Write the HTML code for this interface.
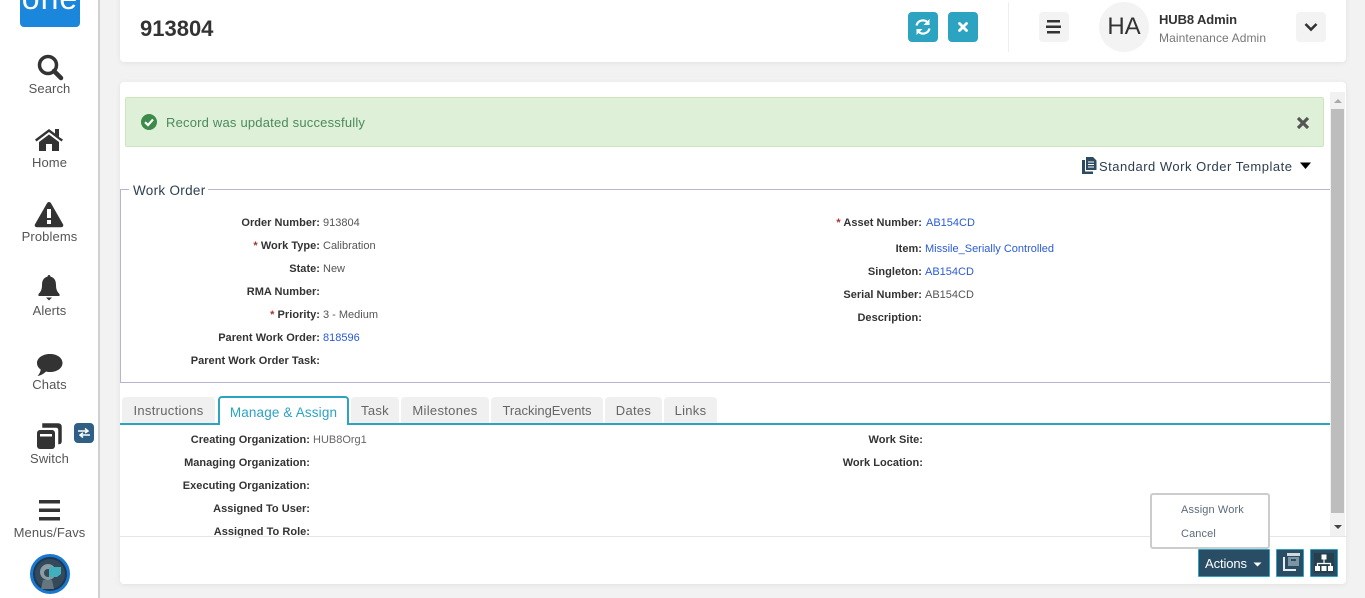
<!DOCTYPE html>
<html><head><meta charset="utf-8"><style>
*{box-sizing:border-box}
html,body{margin:0;padding:0;width:1365px;height:598px;overflow:hidden;background:#f2f2f2;font-family:"Liberation Sans",sans-serif;color:#333}
.a{position:absolute}
.t{position:absolute;white-space:nowrap;line-height:16px;height:16px}
.nav{position:absolute;left:0;width:99px;text-align:center;font-size:13px;letter-spacing:.1px;color:#555;line-height:16px;margin-top:1px}
.l{position:absolute;white-space:nowrap;line-height:16px;height:16px;text-align:right;font-size:11px;font-weight:bold;color:#333;letter-spacing:.03px;margin-top:1px}
.v{position:absolute;white-space:nowrap;line-height:16px;height:16px;font-size:11px;color:#555;letter-spacing:0;margin-top:1px}
.k{color:#2a5bd7}
.r{color:#a33}
.tab{position:absolute;top:397px;height:26px;background:#f0f0f0;border-radius:4px 4px 0 0;text-align:center;font-size:13px;line-height:27px;color:#666;letter-spacing:.3px}
</style></head><body>

<div class="a" style="left:0;top:0;width:100px;height:598px;background:#fff;border-right:2px solid #d0d0d0"></div>
<div class="a" style="left:20px;top:-10px;width:60px;height:37px;background:#1a86dc;border-radius:0 0 4px 4px;overflow:hidden;color:#fff;text-align:center;font-size:32px;line-height:16px;letter-spacing:1px">one</div>

<svg class="a" style="left:36px;top:53px" width="28" height="28" viewBox="0 0 28 28"><circle cx="12" cy="12" r="8.500" fill="none" stroke="#333" stroke-width="3.500"/><path d="M18 18l7 7" stroke="#333" stroke-width="4.500" stroke-linecap="round"/></svg>
<div class="nav" style="top:80px">Search</div>
<svg class="a" style="left:34px;top:127px" width="30" height="26" viewBox="0 0 30 26"><path d="M1 12.500L15 2l6 4.500V2h4v8l4 2.500-1.500 2L15 5 2.500 14.500z" fill="#333"/><path d="M5 15L15 7.500 25 15v9h-7v-7h-6v7H5z" fill="#333"/></svg>
<div class="nav" style="top:154px">Home</div>
<svg class="a" style="left:34px;top:201px" width="30" height="27" viewBox="0 0 30 27"><path d="M15 1c1 0 1.500.5 2 1.300l12 21c.8 1.500-.2 3-2 3H3c-1.800 0-2.800-1.500-2-3l12-21C13.500 1.500 14 1 15 1z" fill="#333"/><rect x="13" y="8" width="4" height="9" fill="#fff"/><rect x="13" y="19" width="4" height="4" fill="#fff"/></svg>
<div class="nav" style="top:228px">Problems</div>
<svg class="a" style="left:38px;top:275px" width="22" height="26" viewBox="0 0 22 26"><path d="M11 0c1 0 1.500.7 1.500 1.800C16.500 2.500 18 6 18 10c0 5 1.500 7 3.500 9v2H.5v-2C2.500 17 4 15 4 10c0-4 1.500-7.500 5.500-8.200C9.500.7 10 0 11 0z" fill="#333"/><path d="M8 22.500h6L11 25.500z" fill="#333"/></svg>
<div class="nav" style="top:302px">Alerts</div>
<svg class="a" style="left:36px;top:353px" width="27" height="24" viewBox="0 0 27 24"><path d="M14 1c7 0 12.500 3.800 12.500 9S21 19 14 19c-1.500 0-3-.2-4-.5C8 20.500 5 22.500 1.500 23c1.700-1.700 3-4 3.200-6.500C2.500 15 1 12.700 1 10 1 4.800 7 1 14 1z" fill="#333"/></svg>
<div class="nav" style="top:376px">Chats</div>
<svg class="a" style="left:36px;top:423px" width="27" height="27" viewBox="0 0 27 27"><path d="M7 1h15c2 0 3 1 3 3v14c0 2-1 2.500-2 2.500V7c0-2-1-3-3-3H7z" fill="#333" stroke="#333" stroke-width="1.500"/><rect x="1" y="7" width="18" height="19" rx="3" fill="#333"/><rect x="4" y="11" width="12" height="2.500" fill="#fff"/></svg>
<div class="a" style="left:74px;top:423px;width:20px;height:20px;background:#2f5f85;border-radius:4px"></div>
<svg class="a" style="left:77px;top:427px" width="14" height="12" viewBox="0 0 14 12"><path d="M1 4h9M8 1.500L11 4 8 6M13 8H4M6 5.800L3 8l3 2.500" stroke="#fff" stroke-width="1.500" fill="none"/></svg>
<div class="nav" style="top:450px">Switch</div>
<svg class="a" style="left:39px;top:500px" width="22" height="22"><rect x="0" y="0" width="21" height="3.500" fill="#333"/><rect x="0" y="8.500" width="21" height="3.500" fill="#333"/><rect x="0" y="17" width="21" height="3.500" fill="#333"/></svg>
<div class="nav" style="top:524px">Menus/Favs</div>
<svg class="a" style="left:30px;top:554px" width="40" height="40" viewBox="0 0 40 40"><circle cx="20" cy="20" r="18.500" fill="#1c3a55" stroke="#1a78d0" stroke-width="3"/><circle cx="20" cy="20" r="15" fill="#34495a"/><circle cx="18" cy="18" r="8" fill="#8a9ca6"/><circle cx="18" cy="19" r="4" fill="#3a4a55"/><path d="M19 13h12v7l-4 3h-8z" fill="#3fb0bc"/><path d="M13 26h9l2 9H11z" fill="#66767f"/></svg>

<div class="a" style="left:120px;top:-10px;width:1226px;height:72px;background:#fff;border-radius:4px;box-shadow:0 1px 6px rgba(0,0,0,.07)"></div>
<div class="t" style="left:140px;top:16px;height:26px;line-height:26px;font-size:22px;font-weight:bold;color:#333">913804</div>
<div class="a" style="left:908px;top:12px;width:30px;height:30px;background:#2ca3c1;border-radius:4px"></div>
<svg class="a" style="left:914px;top:18px" width="18" height="18" viewBox="0 0 18 18"><path d="M2.500 7.500A6.500 6.500 0 0 1 14 5" fill="none" stroke="#fff" stroke-width="2.200"/><path d="M15.500 1v6h-6z" fill="#fff"/><path d="M15.500 10.500A6.500 6.500 0 0 1 4 13" fill="none" stroke="#fff" stroke-width="2.200"/><path d="M2.500 17v-6h6z" fill="#fff"/></svg>
<div class="a" style="left:948px;top:12px;width:30px;height:30px;background:#2ca3c1;border-radius:4px"></div>
<svg class="a" style="left:957px;top:21px" width="12" height="12" viewBox="0 0 12 12"><path d="M2.500 2.500l7 7M9.500 2.500l-7 7" stroke="#fff" stroke-width="2.800" stroke-linecap="round"/></svg>
<div class="a" style="left:1008px;top:2px;width:1px;height:50px;background:#eee"></div>
<div class="a" style="left:1039px;top:12px;width:30px;height:30px;background:#f3f3f3;border-radius:4px"></div>
<svg class="a" style="left:1046px;top:20px" width="16" height="14"><rect x="1" y="0" width="13" height="2.500" fill="#333"/><rect x="0" y="5.500" width="15" height="2.500" fill="#333"/><rect x="1" y="11" width="13" height="2.500" fill="#333"/></svg>
<div class="a" style="left:1099px;top:2px;width:50px;height:50px;background:#f3f3f3;border-radius:50%;text-align:center;line-height:50px;font-size:24px;color:#333">HA</div>
<div class="t" style="left:1159px;top:12px;font-size:13px;font-weight:bold;color:#333;letter-spacing:-.1px">HUB8 Admin</div>
<div class="t" style="left:1159px;top:30px;font-size:12px;color:#777;letter-spacing:.1px">Maintenance Admin</div>
<div class="a" style="left:1296px;top:12px;width:30px;height:30px;background:#f3f3f3;border-radius:4px"></div>
<svg class="a" style="left:1304px;top:22px" width="14" height="10" viewBox="0 0 14 10"><path d="M1.500 2L7 7.500 12.500 2" fill="none" stroke="#333" stroke-width="2.600"/></svg>

<div class="a" style="left:120px;top:82px;width:1226px;height:502px;background:#fff;border-radius:4px;box-shadow:0 1px 6px rgba(0,0,0,.07)"></div>

<div class="a" style="left:1330px;top:92px;width:15px;height:444px;background:#f1f1f1"></div>
<div class="a" style="left:1331px;top:109px;width:13px;height:404px;background:#bdbdbd"></div>
<svg class="a" style="left:1333px;top:98px" width="10" height="6"><path d="M1 5h8L5 1z" fill="#aaa"/></svg>
<svg class="a" style="left:1333px;top:524px" width="10" height="6"><path d="M1 1h8L5 5z" fill="#444"/></svg>

<div class="a" style="left:125px;top:97px;width:1199px;height:50px;background:#dff0d8;border:1px solid #cfe5bf;border-radius:2px"></div>
<svg class="a" style="left:141px;top:114px" width="16" height="16" viewBox="0 0 16 16"><circle cx="8" cy="8" r="8" fill="#3c8b4a"/><path d="M4 8.200L7 11l5-5.500" fill="none" stroke="#fff" stroke-width="2.200"/></svg>
<div class="t" style="left:166px;top:115px;font-size:13px;color:#4a8a5e;letter-spacing:.2px">Record was updated successfully</div>
<svg class="a" style="left:1297px;top:117px" width="12" height="12" viewBox="0 0 12 12"><path d="M1 1l10 10M11 1L1 11" stroke="#555" stroke-width="3.200"/></svg>

<svg class="a" style="left:1082px;top:157px" width="15" height="17" viewBox="0 0 15 17"><path d="M4 0h7l3.500 3.500V13H4z" fill="#2c4a60"/><path d="M0 3h3v11.500h8V17H0z" fill="#2c4a60"/><path d="M6 5h6M6 7.500h6M6 10h6" stroke="#fff" stroke-width="1"/></svg>
<div class="t" style="left:1099px;top:159px;font-size:13px;color:#2c3e50;letter-spacing:.5px">Standard Work Order Template</div>
<svg class="a" style="left:1300px;top:162px" width="12" height="8"><path d="M0 .5h11L5.500 7z" fill="#000"/></svg>

<div class="a" style="left:120px;top:189px;width:1210px;height:194px;border:1px solid #b5b5cf;border-right:0"></div>
<div class="t" style="left:129px;top:183px;padding:0 2px 0 4px;background:#fff;font-size:13.500px;color:#2c3e50;letter-spacing:.3px">Work Order</div>

<div class="l" style="right:1045px;top:214px">Order Number:</div><div class="v" style="left:323px;top:214px">913804</div>
<div class="l" style="right:1045px;top:237px"><span class="r">*</span> Work Type:</div><div class="v" style="left:323px;top:237px">Calibration</div>
<div class="l" style="right:1045px;top:260px">State:</div><div class="v" style="left:323px;top:260px">New</div>
<div class="l" style="right:1045px;top:283px">RMA Number:</div>
<div class="l" style="right:1045px;top:306px"><span class="r">*</span> Priority:</div><div class="v" style="left:323px;top:306px">3 - Medium</div>
<div class="l" style="right:1045px;top:329px">Parent Work Order:</div><div class="v k" style="left:323px;top:329px">818596</div>
<div class="l" style="right:1045px;top:352px">Parent Work Order Task:</div>

<div class="l" style="right:443px;top:214px"><span class="r">*</span> Asset Number:</div><div class="v k" style="left:926px;top:214px">AB154CD</div>
<div class="l" style="right:443px;top:240px">Item:</div><div class="v k" style="left:925px;top:240px">Missile_Serially Controlled</div>
<div class="l" style="right:443px;top:263px">Singleton:</div><div class="v k" style="left:925px;top:263px">AB154CD</div>
<div class="l" style="right:443px;top:286px">Serial Number:</div><div class="v" style="left:925px;top:286px">AB154CD</div>
<div class="l" style="right:443px;top:309px">Description:</div>

<div class="tab" style="left:122px;width:93px">Instructions</div>
<div class="a" style="left:120px;top:423px;width:1210px;height:2px;background:#2ca3c1"></div>
<div class="tab" style="left:218px;top:396px;width:131px;height:29px;background:#fff;border:2px solid #2ca3c1;border-bottom:0;color:#2ca3c1;line-height:29px;font-size:13.500px;letter-spacing:.15px;font-weight:500">Manage &amp; Assign</div>
<div class="tab" style="left:351px;width:48px">Task</div>
<div class="tab" style="left:401px;width:88px">Milestones</div>
<div class="tab" style="left:491px;width:112px;letter-spacing:0">TrackingEvents</div>
<div class="tab" style="left:605px;width:57px">Dates</div>
<div class="tab" style="left:664px;width:53px">Links</div>

<div class="l" style="right:1055px;top:431px">Creating Organization:</div><div class="v" style="left:313px;top:431px;color:#666">HUB8Org1</div>
<div class="l" style="right:1055px;top:454px">Managing Organization:</div>
<div class="l" style="right:1055px;top:477px">Executing Organization:</div>
<div class="l" style="right:1055px;top:500px">Assigned To User:</div>
<div class="l" style="right:1055px;top:523px">Assigned To Role:</div>
<div class="l" style="right:442px;top:431px">Work Site:</div>
<div class="l" style="right:442px;top:454px">Work Location:</div>

<div class="a" style="left:120px;top:536px;width:1226px;height:1px;background:#e6e6e6"></div>

<div class="a" style="left:1150px;top:493px;width:120px;height:56px;background:#fff;border:2px solid #ccc;border-radius:3px"></div>
<div class="t" style="left:1181px;top:502px;font-size:11px;color:#5a6b7b;letter-spacing:.12px">Assign Work</div>
<div class="t" style="left:1181px;top:526px;font-size:11px;color:#5a6b7b;letter-spacing:.12px">Cancel</div>

<div class="a" style="left:1198px;top:549px;width:72px;height:28px;background:#2a4d66;border:1px solid #2ca3c1;border-radius:1px"></div>
<div class="t" style="left:1205px;top:556px;font-size:13px;color:#fff;letter-spacing:-.1px">Actions</div>
<svg class="a" style="left:1253px;top:562px" width="9" height="5"><path d="M.5 .5h8L4.500 4.500z" fill="#fff"/></svg>
<div class="a" style="left:1276px;top:549px;width:28px;height:28px;background:#2a4d66;border:1px solid #2ca3c1;border-radius:1px"></div>
<svg class="a" style="left:1281px;top:552px" width="20" height="21" viewBox="0 0 20 21"><rect x="6" y="1" width="13" height="3" fill="#cfd8de"/><rect x="7" y="5" width="11" height="9" fill="#7f94a3"/><rect x="10" y="7" width="5" height="2" fill="#2a4d66"/><path d="M3 5v13h12" fill="none" stroke="#e8eef2" stroke-width="2"/></svg>
<div class="a" style="left:1310px;top:549px;width:28px;height:28px;background:#2a4d66;border:1px solid #2ca3c1;border-radius:1px"></div>
<svg class="a" style="left:1314px;top:553px" width="20" height="20" viewBox="0 0 20 20"><rect width="20" height="20" fill="#24404f"/><rect x="7.500" y="1.500" width="5" height="5" fill="#fff"/><path d="M10 6.500v4M3.500 13v-2.500h13V13" fill="none" stroke="#fff" stroke-width="1.200"/><rect x="1" y="13" width="5" height="5" fill="#fff"/><rect x="7.500" y="13" width="5" height="5" fill="#fff"/><rect x="14" y="13" width="5" height="5" fill="#fff"/></svg>

</body></html>
